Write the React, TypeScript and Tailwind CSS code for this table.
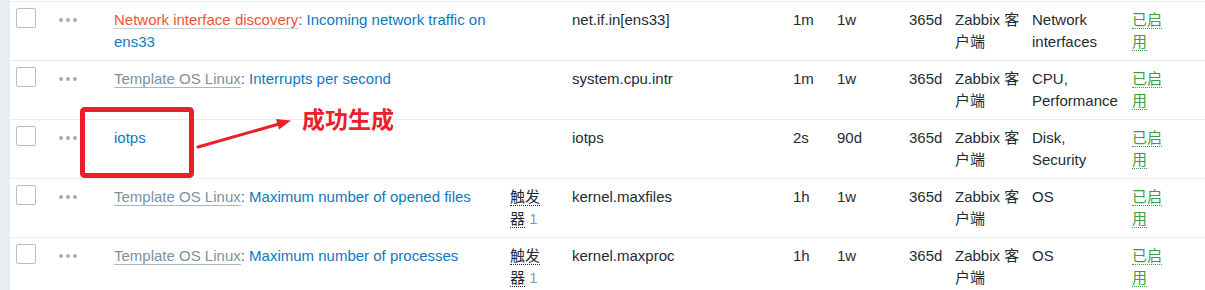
import React from 'react';

type Row = {
  prefix?: { text: string; tone: 'red' | 'gray' };
  name: string;
  triggers?: number;
  itemKey: string;
  interval: string;
  history: string;
  trends: string;
  type: string;
  apps: string;
};

const rows: Row[] = [
  {
    prefix: { text: 'Network interface discovery', tone: 'red' },
    name: 'Incoming network traffic on ens33',
    itemKey: 'net.if.in[ens33]',
    interval: '1m',
    history: '1w',
    trends: '365d',
    type: 'Zabbix 客户端',
    apps: 'Network interfaces',
  },
  {
    prefix: { text: 'Template OS Linux', tone: 'gray' },
    name: 'Interrupts per second',
    itemKey: 'system.cpu.intr',
    interval: '1m',
    history: '1w',
    trends: '365d',
    type: 'Zabbix 客户端',
    apps: 'CPU, Performance',
  },
  {
    name: 'iotps',
    itemKey: 'iotps',
    interval: '2s',
    history: '90d',
    trends: '365d',
    type: 'Zabbix 客户端',
    apps: 'Disk, Security',
  },
  {
    prefix: { text: 'Template OS Linux', tone: 'gray' },
    name: 'Maximum number of opened files',
    triggers: 1,
    itemKey: 'kernel.maxfiles',
    interval: '1h',
    history: '1w',
    trends: '365d',
    type: 'Zabbix 客户端',
    apps: 'OS',
  },
  {
    prefix: { text: 'Template OS Linux', tone: 'gray' },
    name: 'Maximum number of processes',
    triggers: 1,
    itemKey: 'kernel.maxproc',
    interval: '1h',
    history: '1w',
    trends: '365d',
    type: 'Zabbix 客户端',
    apps: 'OS',
  },
];

const cell = 'px-[6px] py-[7px] leading-[22px]';

function ItemRow({ row }: { row: Row }) {
  return (
    <div className="grid grid-cols-[43px_55px_396px_62px_221px_44px_72px_46px_77px_100px_1fr] border-b border-[#ebeef0] min-h-[59px]">
      <div className={cell}>
        <div className="w-[20px] h-[20px] -mt-px rounded-[2px] border border-[#b4bec5] bg-white" />
      </div>
      <div className={cell}>
        <div className="flex items-center gap-[3px] h-[22px]">
          <span className="w-[4px] h-[4px] rounded-full bg-[#a3afb8]" />
          <span className="w-[4px] h-[4px] rounded-full bg-[#a3afb8]" />
          <span className="w-[4px] h-[4px] rounded-full bg-[#a3afb8]" />
        </div>
      </div>
      <div className={cell}>
        {row.prefix && (
          <>
            <span
              className={
                row.prefix.tone === 'red'
                  ? 'text-[#ef5337] border-b border-[#c7d0d6]'
                  : 'text-[#7d929d] border-b border-[#aab6bd]'
              }
            >
              {row.prefix.text}
            </span>
            <span className="text-[#2d6d9c]">: </span>
          </>
        )}
        <span className="text-[#0f78c0]">{row.name}</span>
      </div>
      <div className={`${cell} pr-[16px]`}>
        {row.triggers !== undefined && (
          <>
            <span className="border-b border-dotted border-[#1f2c33]">触发器</span>
            <span className="text-[#8a9aa3]"> {row.triggers}</span>
          </>
        )}
      </div>
      <div className={cell}>{row.itemKey}</div>
      <div className={cell}>{row.interval}</div>
      <div className={cell}>{row.history}</div>
      <div className={cell}>{row.trends}</div>
      <div className={`${cell} pr-[4px]`}>{row.type}</div>
      <div className={`${cell} pr-[4px]`}>{row.apps}</div>
      <div className={cell}>
        <div className="w-[40px]">
          <span className="text-[#3d9e45] border-b border-dotted border-[#3d9e45]">已启用</span>
        </div>
      </div>
    </div>
  );
}

export default function App() {
  return (
    <div
      className="relative w-[1205px] h-[290px] overflow-hidden bg-white flex text-[15px] text-[#1f2c33]"
      style={{ fontFamily: '"Liberation Sans", Arial, "Noto Sans CJK SC", sans-serif' }}
    >
      <div className="w-[10px] shrink-0 bg-[#e9edf0]" />
      <div className="flex-1 pt-px">
        <div className="border-t border-[#ebeef0]">
          {rows.map((r, i) => (
            <ItemRow key={i} row={r} />
          ))}
        </div>
      </div>

      {/* annotation overlay */}
      <svg className="absolute left-0 top-0 pointer-events-none" width="1205" height="290">
        <rect x="82.5" y="109.5" width="109" height="66" rx="2" fill="none" stroke="#ea1f2b" strokeWidth="5" />
        <line x1="198" y1="147" x2="279" y2="124" stroke="#ea1f2b" strokeWidth="3" strokeLinecap="round" />
        <polygon points="291,120.5 276,119 279,129.5" fill="#ea1f2b" />
      </svg>
      <span
        className="absolute left-[302px] top-[107px] text-[23px] leading-none font-bold text-[#ea1f2b]"
        style={{ fontFamily: '"Noto Sans CJK SC", sans-serif' }}
      >
        成功生成
      </span>
    </div>
  );
}
